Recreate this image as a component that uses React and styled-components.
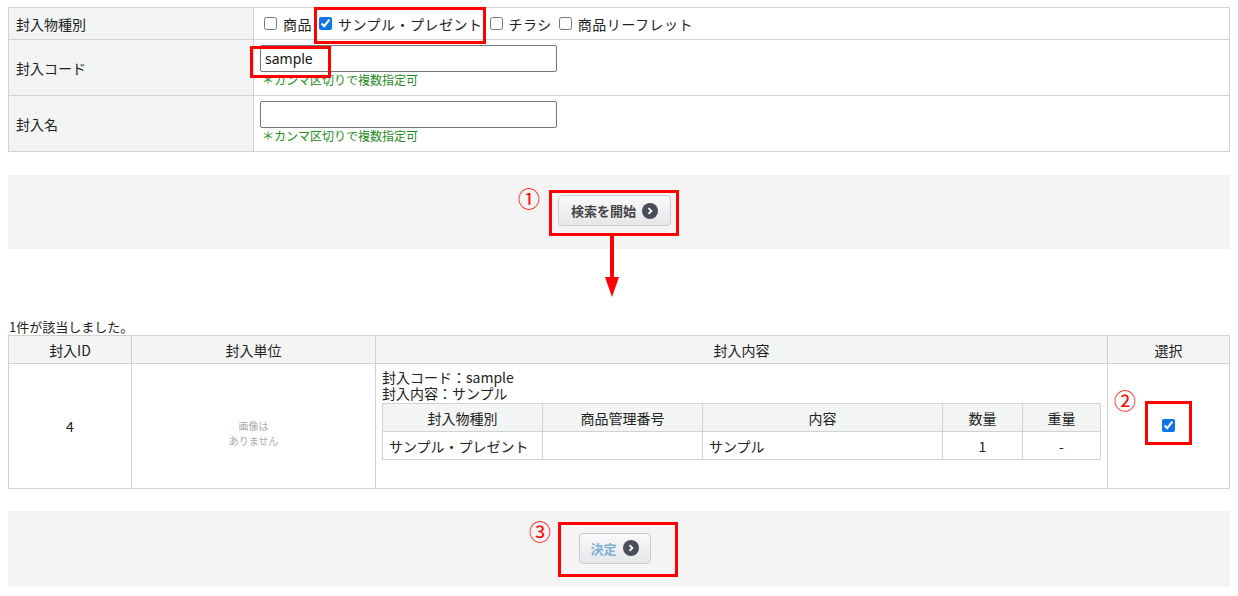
import React from "react";
import styled, { createGlobalStyle } from "styled-components";

const Global = createGlobalStyle`
  html, body { margin: 0; padding: 0; background: #fff; }
  body {
    font-family: "Noto Sans CJK JP", "Noto Sans", "Liberation Sans", sans-serif;
    font-size: 14px;
    color: #222;
  }
  * { box-sizing: border-box; }
`;

const Page = styled.div`
  position: relative;
  width: 1238px;
  height: 596px;
  padding: 7px 8px 0 8px;
  overflow: hidden;
`;

const Table = styled.table`
  width: 100%;
  border-collapse: collapse;
  table-layout: fixed;
  border: 1px solid #d2d2d2;
`;

const Label = styled.th`
  width: 245px;
  background: #f3f4f4;
  border: 1px solid #d2d2d2;
  text-align: left;
  font-weight: normal;
  padding: 0 7px;
  height: ${(p) => p.$h}px;
  font-size: 14px;
  line-height: 18px;
`;

const Cell = styled.td`
  border: 1px solid #d2d2d2;
  padding: ${(p) => p.$pad || "0 6px"};
  vertical-align: ${(p) => p.$va || "middle"};
`;

const CheckRow = styled.div`
  display: flex;
  align-items: center;
  gap: 7px;
  padding-left: 4px;
`;

const CheckLabel = styled.label`
  display: inline-flex;
  align-items: center;
  gap: 6px;
  font-size: 14px;
  line-height: 18px;
  letter-spacing: 0.5px;
`;

const Box = styled.input`
  width: 13px;
  height: 13px;
  margin: 0;
  accent-color: #0b75e9;
`;

const TextInput = styled.input`
  display: block;
  width: 297px;
  height: 27px;
  border: 1px solid #767676;
  border-radius: 2px;
  padding: 0 4px;
  font-family: "Noto Sans", "Liberation Sans", sans-serif;
  font-size: 14px;
  color: #111;
  outline: none;
`;

const Note = styled.div`
  color: #228b22;
  font-size: 12px;
  line-height: 15px;
  padding-left: 2px;
`;

const Band = styled.div`
  margin-top: ${(p) => p.$mt}px;
  height: ${(p) => p.$h}px;
  background: #f4f4f4;
  display: flex;
  justify-content: center;
  align-items: center;
  padding-right: 9px;
  padding-bottom: ${(p) => p.$pb || 0}px;
`;

const Button = styled.button`
  display: inline-flex;
  align-items: center;
  justify-content: center;
  gap: 6px;
  width: ${(p) => p.$w}px;
  height: 31px;
  border: 1px solid #c9cbd0;
  border-radius: 4px;
  background: linear-gradient(#f9f9f9, #e6e7e9);
  font-family: "Noto Sans CJK JP", sans-serif;
  font-size: 13px;
  font-weight: bold;
  color: ${(p) => (p.$muted ? "#7fb0d6" : "#444")};
  padding: 0;
`;

const Go = styled.span`
  display: inline-flex;
  width: 16px;
  height: 16px;
  border-radius: 50%;
  background: #4a4d57;
  align-items: center;
  justify-content: center;
`;

const Found = styled.div`
  margin-top: 70px;
  font-size: 13px;
  line-height: 16px;
  padding-left: 1px;
`;

const Th = styled.th`
  background: #f3f4f4;
  border: 1px solid #d2d2d2;
  font-weight: normal;
  font-size: 14px;
  height: ${(p) => p.$h}px;
  padding: 0;
  text-align: center;
  width: ${(p) => (p.$w ? p.$w + "px" : "auto")};
`;

const Td = styled.td`
  border: 1px solid #d2d2d2;
  text-align: ${(p) => p.$align || "center"};
  vertical-align: ${(p) => p.$va || "middle"};
  height: ${(p) => p.$h}px;
  padding: ${(p) => p.$pad || "0 6px"};
  font-size: 14px;
`;

const NoImage = styled.div`
  color: #aaa;
  font-size: 10px;
  line-height: 15px;
  padding-top: 14px;
`;

const InfoLine = styled.div`
  font-size: 14px;
  line-height: 16px;
  height: 16px;
`;

const Inner = styled.table`
  width: 719px;
  margin-top: 2px;
  border-collapse: collapse;
  table-layout: fixed;
  margin-bottom: 27px;
`;

const Red = styled.div`
  position: absolute;
  border: 3px solid #ff0000;
  left: ${(p) => p.$x}px;
  top: ${(p) => p.$y}px;
  width: ${(p) => p.$w}px;
  height: ${(p) => p.$h}px;
  pointer-events: none;
`;

const Num = styled.span`
  position: absolute;
  left: ${(p) => p.$x}px;
  top: ${(p) => p.$y}px;
  color: #ff0000;
  font-family: "Noto Sans CJK JP", sans-serif;
  font-size: 22px;
  line-height: 22px;
`;

const Arrow = styled.svg`
  position: absolute;
  left: 603px;
  top: 233px;
`;

const Chevron = () => (
  <svg width="8" height="8" viewBox="0 0 8 8">
    <path d="M2.5 1.2 L5.4 4 L2.5 6.8" stroke="#fff" strokeWidth="1.8" fill="none" />
  </svg>
);

export default function App() {
  return (
    <>
      <Global />
      <Page>
        <Table>
          <tbody>
            <tr>
              <Label $h={32}>封入物種別</Label>
              <Cell>
                <CheckRow>
                  <CheckLabel><Box type="checkbox" readOnly />商品</CheckLabel>
                  <CheckLabel><Box type="checkbox" checked readOnly />サンプル・プレゼント</CheckLabel>
                  <CheckLabel><Box type="checkbox" readOnly />チラシ</CheckLabel>
                  <CheckLabel><Box type="checkbox" readOnly />商品リーフレット</CheckLabel>
                </CheckRow>
              </Cell>
            </tr>
            <tr>
              <Label $h={56}>封入コード</Label>
              <Cell $va="top" $pad="5px 6px 0 6px">
                <TextInput defaultValue="sample" />
                <Note>＊カンマ区切りで複数指定可</Note>
              </Cell>
            </tr>
            <tr>
              <Label $h={56}>封入名</Label>
              <Cell $va="top" $pad="5px 6px 0 6px">
                <TextInput defaultValue="" />
                <Note>＊カンマ区切りで複数指定可</Note>
              </Cell>
            </tr>
          </tbody>
        </Table>

        <Band $mt={23} $h={74} $pb={3}>
          <Button $w={113}>検索を開始<Go><Chevron /></Go></Button>
        </Band>

        <Found>1件が該当しました。</Found>

        <Table>
          <thead>
            <tr>
              <Th $h={28} $w={123}>封入ID</Th>
              <Th $w={244}>封入単位</Th>
              <Th>封入内容</Th>
              <Th $w={122}>選択</Th>
            </tr>
          </thead>
          <tbody>
            <tr>
              <Td $h={125}>4</Td>
              <Td>
                <NoImage>画像は<br />ありません</NoImage>
              </Td>
              <Td $align="left" $va="top" $pad="5px 6px 0 6px">
                <InfoLine>封入コード：sample</InfoLine>
                <InfoLine>封入内容：サンプル</InfoLine>
                <Inner>
                  <thead>
                    <tr>
                      <Th $h={28} $w={160}>封入物種別</Th>
                      <Th $w={160}>商品管理番号</Th>
                      <Th $w={240}>内容</Th>
                      <Th $w={80}>数量</Th>
                      <Th>重量</Th>
                    </tr>
                  </thead>
                  <tbody>
                    <tr>
                      <Td $h={28} $align="left">サンプル・プレゼント</Td>
                      <Td />
                      <Td $align="left">サンプル</Td>
                      <Td>1</Td>
                      <Td>-</Td>
                    </tr>
                  </tbody>
                </Inner>
              </Td>
              <Td>
                <Box type="checkbox" checked readOnly />
              </Td>
            </tr>
          </tbody>
        </Table>

        <Band $mt={22} $h={76} $pb={2}>
          <Button $w={72} $muted>決定<Go><Chevron /></Go></Button>
        </Band>

        <Red $x={314} $y={7} $w={172} $h={37} />
        <Red $x={250} $y={46} $w={81} $h={32} />
        <Red $x={549} $y={190} $w={130} $h={46} />
        <Red $x={1145} $y={401} $w={47} $h={44} />
        <Red $x={558} $y={522} $w={120} $h={55} />
        <Num $x={518} $y={186}>①</Num>
        <Num $x={1114} $y={388}>②</Num>
        <Num $x={529} $y={519}>③</Num>
        <Arrow width="18" height="66" viewBox="0 0 18 66">
          <rect x="7" y="0" width="4" height="46" fill="#ff0000" />
          <polygon points="2,44 16,44 9,64" fill="#ff0000" />
        </Arrow>
      </Page>
    </>
  );
}
